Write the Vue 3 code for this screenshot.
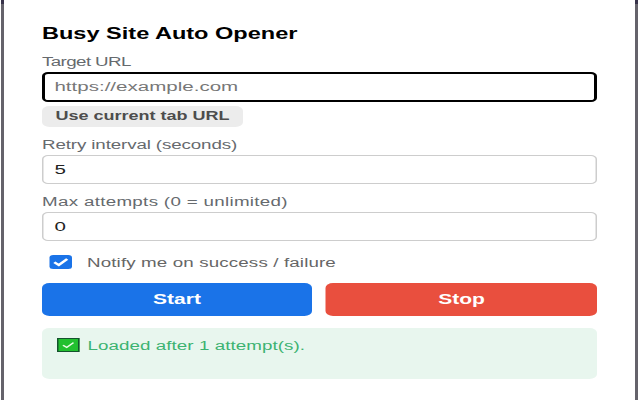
<script setup>
const fields = [
  { label: 'Retry interval (seconds)', value: '5', cls: 'label-retry' },
  { label: 'Max attempts (0 = unlimited)', value: '0', cls: 'label-max' },
]
</script>

<template>
  <div class="page">
    <i class="corner corner-left"></i>
    <i class="corner corner-right"></i>
    <main class="popup">
      <h1 class="title">Busy Site Auto Opener</h1>
      <div class="label label-first">Target URL</div>
      <div class="input focused">https://example.com</div>
      <div class="tab-btn">Use current tab URL</div>
      <template v-for="f in fields" :key="f.label">
        <div class="label" :class="f.cls">{{ f.label }}</div>
        <div class="input filled">{{ f.value }}</div>
      </template>
      <div class="notify">
        <span class="check">
          <svg width="15" height="14" viewBox="0 0 15 14"><path d="M3.2 7.2 6.2 10 11.8 4" fill="none" stroke="#fff" stroke-width="2"/></svg>
        </span>
        <span class="notify-text">Notify me on success / failure</span>
      </div>
      <div class="actions">
        <div class="btn start">Start</div>
        <div class="btn stop">Stop</div>
      </div>
      <div class="status">
        <span class="emoji">
          <svg width="13" height="12" viewBox="0 0 13 12"><path d="M3 6.2 5.5 8.4 10 3.6" fill="none" stroke="#eafbe6" stroke-width="1.3"/></svg>
        </span>
        <span class="status-text">Loaded after 1 attempt(s).</span>
      </div>
    </main>
  </div>
</template>

<style>
body { margin: 0; background: #fff; }
</style>

<style scoped>
.page {
  position: relative;
  box-sizing: border-box;
  width: 640px;
  height: 400px;
  overflow: hidden;
  margin: 0;
  background: #fff;
  padding-left: 42px;
  font-family: "Liberation Sans", Arial, sans-serif;
}
.page::before, .page::after {
  content: "";
  position: absolute;
  top: 0;
  bottom: 0;
  width: 3px;
  background: #65636b;
}
.page::before { left: 1px; }
.page::after { left: 635px; }
.corner {
  position: absolute;
  z-index: 1;
  top: 0;
  width: 3px;
  height: 4px;
  background: #37334a;
}
.corner-left { left: 1px; }
.corner-right { left: 635px; }
.popup {
  box-sizing: border-box;
  width: 370px;
  padding-top: 25px;
  transform: scaleX(1.5);
  transform-origin: left top;
}
.title {
  margin: 0;
  font-size: 15.7px;
  line-height: 18px;
  font-weight: 700;
  color: #000;
}
.label {
  margin-top: 8px;
  padding-top: 2px;
  font-size: 12.5px;
  line-height: 16px;
  color: #666a6e;
}
.label-first {
  margin-top: 9px;
  letter-spacing: -0.4px;
}
.label-retry { letter-spacing: -0.08px; }
.label-max { letter-spacing: 0.21px; }
.input {
  box-sizing: border-box;
  height: 29px;
  margin-top: 2px;
  padding: 1px 7.3px 0;
  border: 1px solid #cdcdcd;
  border-radius: 4px;
  font-size: 13.7px;
  line-height: 26px;
}
.focused {
  height: 30px;
  padding: 0 6.3px;
  border: 2px solid #000;
  line-height: 26px;
  color: #777;
}
.filled { color: #222; }
.tab-btn {
  width: 134px;
  height: 21px;
  margin-top: 4px;
  border-radius: 5px;
  background: #ececec;
  font-size: 12px;
  line-height: 21px;
  font-weight: 700;
  color: #4d4d4d;
  text-align: center;
}
.notify {
  display: flex;
  align-items: center;
  gap: 10.5px;
  height: 14px;
  margin: 14px 0 0 4.5px;
  font-size: 12.5px;
  line-height: 15px;
  letter-spacing: 0.09px;
  color: #666;
}
.notify-text { padding-top: 2px; }
.check {
  display: flex;
  width: 15px;
  height: 14px;
  border-radius: 2.5px;
  background: #1a73e8;
}
.actions {
  display: flex;
  gap: 9.4px;
  margin-top: 13.5px;
}
.btn {
  height: 33px;
  border-radius: 5px;
  color: #fff;
  font-size: 14px;
  line-height: 33px;
  font-weight: 700;
  text-align: center;
}
.start { width: 180px; background: #1a73e8; }
.stop { width: 180.6px; background: #e94f3e; }
.status {
  display: flex;
  align-items: flex-start;
  gap: 5px;
  box-sizing: border-box;
  height: 51px;
  margin-top: 12.5px;
  padding: 8px 10px;
  border-radius: 5px;
  background: #e8f6ee;
  color: #3cb371;
  font-size: 12.5px;
  line-height: 19px;
  letter-spacing: 0.05px;
}
.status-text { padding-top: 1px; }
.emoji {
  display: flex;
  box-sizing: border-box;
  flex: none;
  width: 15.3px;
  height: 14px;
  margin-top: 2px;
  border: 1px solid #14532d;
  background: #22c02f;
}
</style>
